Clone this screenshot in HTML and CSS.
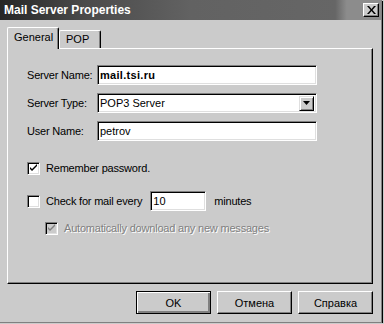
FILE: index.html
```html
<!DOCTYPE html>
<html lang="ru">
<head>
    <meta charset="UTF-8">
    <title>Mail Server Properties</title>
    <link rel="stylesheet" href="styles.css">
</head>
<body>
    <div class="window">
        <div class="titlebar">
            <span class="title">Mail Server Properties</span>
            <span class="close">
                <svg width="9" height="8" viewBox="0 0 9 8"><path d="M0 0h2l2.5 3 2.5-3h2L5.5 4 9 8H7L4.5 5 2 8H0l3.5-4z" fill="#000"/></svg>
            </span>
        </div>

        <div class="tabs">
            <div class="tab active">General</div>
            <div class="tab">POP</div>
        </div>

        <div class="panel">
            <div class="row">
                <label>Server Name:</label>
                <div class="field bold">mail.tsi.ru</div>
            </div>
            <div class="row">
                <label>Server Type:</label>
                <div class="field select">
                    <span>POP3 Server</span>
                    <span class="drop">
                        <svg width="7" height="4" viewBox="0 0 7 4"><path d="M0 0h7L3.5 4z" fill="#000"/></svg>
                    </span>
                </div>
            </div>
            <div class="row">
                <label>User Name:</label>
                <div class="field">petrov</div>
            </div>

            <div class="check remember">
                <span class="box">
                    <svg width="9" height="9" viewBox="0 0 9 9"><path d="M1 3l2 2 5-5v2L3 7 1 5z" fill="#000"/></svg>
                </span>
                <span>Remember password.</span>
            </div>

            <div class="check every">
                <span class="box"></span>
                <span>Check for mail every</span>
                <div class="field small">10</div>
                <span class="unit">minutes</span>
            </div>

            <div class="check auto disabled">
                <span class="box">
                    <svg width="9" height="9" viewBox="0 0 9 9"><path d="M1 3l2 2 5-5v2L3 7 1 5z" fill="#808080"/></svg>
                </span>
                <span>Automatically download any new messages</span>
            </div>
        </div>

        <div class="buttons">
            <div class="btn default"><span>OK</span></div>
            <div class="btn"><span>Отмена</span></div>
            <div class="btn"><span>Справка</span></div>
        </div>
    </div>
</body>
</html>
```

FILE: styles.css
```css
body {
    margin: 0;
    padding: 0;
    background-color: #cbcbcb;
    font-family: 'Liberation Sans', Arial, sans-serif;
    font-size: 11px;
    color: #000;
}
.window {
    width: 381px;
    height: 322px;
    border-right: 1px solid #808080;
    border-bottom: 1px solid #808080;
    box-shadow: 1px 1px 0 #000;
    position: relative;
    overflow: hidden;
}
.titlebar {
    height: 20px;
    display: flex;
    align-items: center;
    justify-content: space-between;
    padding: 0 2px 0 4px;
    background: linear-gradient(90deg, #262626 0%, #4a4a4a 22%, #626262 50%, #666 88%, #8c8c8c 91%, #8c8c8c 100%);
}
.title {
    color: #fff;
    font-weight: bold;
    font-size: 12px;
}
.close {
    width: 14px;
    height: 12px;
    display: flex;
    align-items: center;
    justify-content: center;
    background: #cbcbcb;
    border-top: 1px solid #fff;
    border-left: 1px solid #fff;
    border-right: 1px solid #000;
    border-bottom: 1px solid #000;
    box-shadow: inset -1px -1px 0 #808080;
}
.tabs {
    display: flex;
    align-items: flex-end;
    margin-top: 8px;
    padding-left: 7px;
    height: 20px;
    position: relative;
    z-index: 1;
}
.tab {
    height: 17px;
    padding: 0 6px;
    line-height: 17px;
    border-top: 1px solid #fff;
    border-left: 1px solid #fff;
    border-right: 1px solid #000;
    border-top-left-radius: 2px;
    border-top-right-radius: 2px;
    box-shadow: inset -1px 0 0 #808080;
    background: #cbcbcb;
    width: 28px;
}
.tab.active {
    height: 21px;
    margin-bottom: -1px;
    width: 38px;
    padding: 0 6px;
    line-height: 19px;
}
.panel {
    margin: 0 8px 0 7px;
    height: 236px;
    border-top: 1px solid #fff;
    border-left: 1px solid #fff;
    border-right: 1px solid #000;
    border-bottom: 1px solid #000;
    box-shadow: inset -1px -1px 0 #808080;
    padding: 16px 0 0 19px;
    box-sizing: border-box;
}
.row {
    display: flex;
    align-items: center;
    margin-bottom: 8px;
}
.row label {
    width: 70px;
    flex-shrink: 0;
    white-space: nowrap;
    letter-spacing: -0.2px;
}
.field {
    width: 216px;
    height: 16px;
    background: #fff;
    border-top: 1px solid #808080;
    border-left: 1px solid #808080;
    border-right: 1px solid #fff;
    border-bottom: 1px solid #fff;
    box-shadow: inset 1px 1px 0 #000, inset -1px -1px 0 #dfdfdf;
    padding: 1px 0 1px 2px;
    line-height: 16px;
    display: flex;
    align-items: center;
}
.field.bold {
    font-weight: bold;
    letter-spacing: 0.3px;
}
.field.select {
    justify-content: space-between;
    padding-right: 2px;
    width: 214px;
}
.drop {
    width: 13px;
    height: 13px;
    display: flex;
    align-items: center;
    justify-content: center;
    background: #cbcbcb;
    border-top: 1px solid #dfdfdf;
    border-left: 1px solid #dfdfdf;
    border-right: 1px solid #000;
    border-bottom: 1px solid #000;
    box-shadow: inset 1px 1px 0 #fff, inset -1px -1px 0 #808080;
}
.check {
    display: flex;
    align-items: center;
    height: 14px;
    white-space: nowrap;
    letter-spacing: -0.2px;
}
.box {
    width: 9px;
    height: 9px;
    flex-shrink: 0;
    background: #fff;
    border-top: 1px solid #808080;
    border-left: 1px solid #808080;
    border-right: 1px solid #fff;
    border-bottom: 1px solid #fff;
    box-shadow: inset 1px 1px 0 #000, inset -1px -1px 0 #dfdfdf;
    padding: 1px;
    margin-right: 6px;
    display: flex;
}
.remember {
    margin-top: 20px;
}
.every {
    margin-top: 16px;
    height: 20px;
}
.every .field.small {
    width: 52px;
    margin-left: 8px;
    letter-spacing: 0;
}
.unit {
    margin-left: 8px;
}
.auto {
    margin-top: 10px;
    margin-left: 18px;
}
.disabled {
    color: #808080;
    text-shadow: 1px 1px 0 #fff;
}
.disabled .box {
    background: #cbcbcb;
}
.buttons {
    display: flex;
    justify-content: flex-end;
    gap: 6px;
    margin-top: 7px;
    padding-right: 8px;
}
.btn {
    width: 73px;
    height: 21px;
    display: flex;
    align-items: center;
    justify-content: center;
    border-top: 1px solid #fff;
    border-left: 1px solid #fff;
    border-right: 1px solid #000;
    border-bottom: 1px solid #000;
    box-shadow: inset -1px -1px 0 #808080;
}
.btn.default {
    border: 1px solid #000;
    box-shadow: inset 1px 1px 0 #fff, inset -2px -2px 0 #808080, inset -1px -1px 0 #000;
}
```
